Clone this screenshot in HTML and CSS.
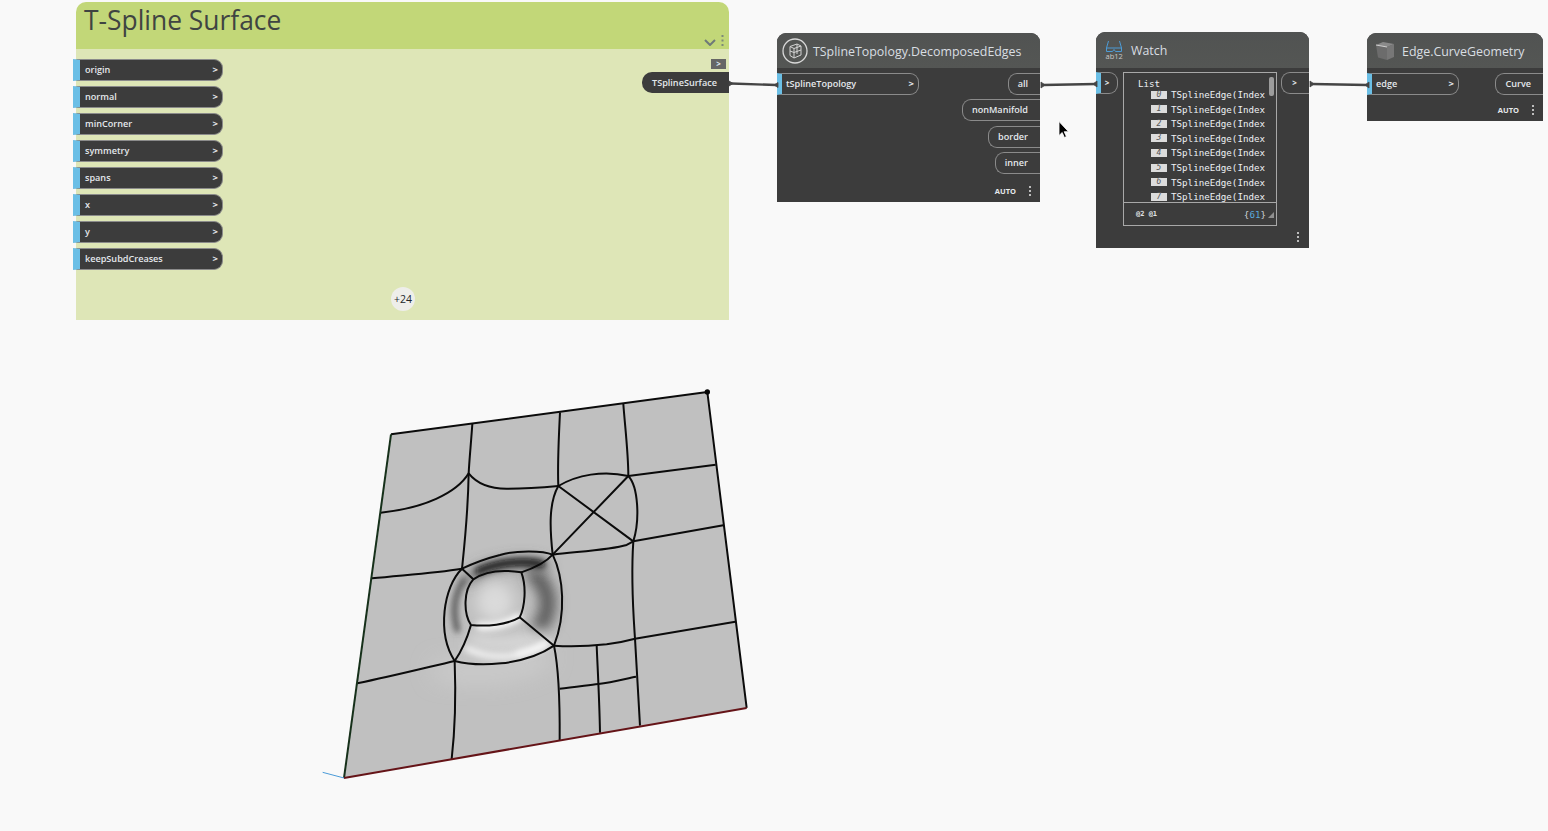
FILE: index.html
```html
<!DOCTYPE html>
<html lang="en">
<head>
<meta charset="utf-8">
<title>T-Spline Surface</title>
<link rel="stylesheet" href="styles.css">
</head>
<body>
<main class="canvas">

  <section class="group">
    <header class="group-head">
      <h1 class="group-title">T-Spline Surface</h1>
      <div class="group-tools">
        <svg class="chevron" width="12" height="7" viewBox="0 0 12 7"><path d="M1 1l5 5 5-5" fill="none" stroke="#6f7a78" stroke-width="2"/></svg>
        <svg class="dots" width="3" height="11" viewBox="0 0 3 11"><path d="M1.5 0v2M1.5 4.500v2M1.500 9v2" stroke="#7d8a78" stroke-width="2"/></svg>
      </div>
    </header>
    <div class="group-body">
      <ul class="port-list">
        <li class="port in wide"><span>origin</span><b>&gt;</b></li>
        <li class="port in wide"><span>normal</span><b>&gt;</b></li>
        <li class="port in wide"><span>minCorner</span><b>&gt;</b></li>
        <li class="port in wide"><span>symmetry</span><b>&gt;</b></li>
        <li class="port in wide"><span>spans</span><b>&gt;</b></li>
        <li class="port in wide"><span>x</span><b>&gt;</b></li>
        <li class="port in wide"><span>y</span><b>&gt;</b></li>
        <li class="port in wide"><span>keepSubdCreases</span><b>&gt;</b></li>
      </ul>
      <div class="group-count">+24</div>
      <div class="mini-tag">&gt;</div>
      <div class="group-out">TSplineSurface</div>
    </div>
  </section>

  <article class="node node-edges">
    <header class="node-head">
      <svg class="icon-round" width="26" height="26" viewBox="0 0 26 26">
        <circle cx="13" cy="13" r="12" fill="none" stroke="#d8d8d8" stroke-width="1.300"/>
        <path d="M8 8.500l7-2.500 4 2v9l-7 3-4-2.500zM12 10.500l7-2.500M12 10.500l-4-2M12 10.500v9.500M8 13l4 1.500 7-2.500M15 6v10" fill="none" stroke="#d4d4d4" stroke-width="1"/>
      </svg>
      <h2 class="node-title">TSplineTopology.DecomposedEdges</h2>
    </header>
    <div class="node-body">
      <div class="port in edge-in"><span>tSplineTopology</span><b>&gt;</b></div>
      <div class="out-list">
        <div class="port out">all</div>
        <div class="port out">nonManifold</div>
        <div class="port out">border</div>
        <div class="port out">inner</div>
      </div>
    </div>
    <footer class="node-foot"><span class="auto">AUTO</span><i class="kebab"></i></footer>
  </article>

  <article class="node node-watch">
    <header class="node-head watch-head">
      <svg class="icon-watch" width="18" height="20" viewBox="0 0 18 20">
        <path d="M3.500 1L1.500 8v3.500h6L9 9.500l1.500 2h6V8l-2-7M1.500 8h15" fill="none" stroke="#4c9bd6" stroke-width="1"/>
        <text x="0.500" y="19" class="abc">ab12</text>
      </svg>
      <h2 class="node-title">Watch</h2>
    </header>
    <div class="watch-body">
      <div class="port in short"><b>&gt;</b></div>
      <div class="watch-panel">
        <div class="watch-list">
          <div class="watch-root">List</div>
          <div class="watch-row"><i>0</i><span>TSplineEdge(Index</span></div>
          <div class="watch-row"><i>1</i><span>TSplineEdge(Index</span></div>
          <div class="watch-row"><i>2</i><span>TSplineEdge(Index</span></div>
          <div class="watch-row"><i>3</i><span>TSplineEdge(Index</span></div>
          <div class="watch-row"><i>4</i><span>TSplineEdge(Index</span></div>
          <div class="watch-row"><i>5</i><span>TSplineEdge(Index</span></div>
          <div class="watch-row"><i>6</i><span>TSplineEdge(Index</span></div>
          <div class="watch-row"><i>7</i><span>TSplineEdge(Index</span></div>
          <div class="watch-thumb"></div>
        </div>
        <div class="watch-foot">
          <span class="levels">@2 @1</span>
          <span class="count">{<em>61</em>}</span>
          <svg class="grip" width="6" height="6" viewBox="0 0 6 6"><path d="M6 0v6H0z" fill="#8f8f8f"/></svg>
        </div>
      </div>
      <div class="port out short-out"><b>&gt;</b></div>
    </div>
    <footer class="node-foot watch-foot-bar"><i class="kebab"></i></footer>
  </article>

  <article class="node node-curve">
    <header class="node-head">
      <svg class="icon-cube" width="20" height="20" viewBox="0 0 20 20">
        <path d="M1 4l11 2v13L3 16.500z" fill="#6c6c6c"/>
        <path d="M12 6l7-3v13l-7 3z" fill="#777"/>
        <path d="M1 4l7-3 11 2-7 3z" fill="#8a8a8a"/>
        <path d="M1 4l11 2" stroke="#cfcfcf" stroke-width="1"/>
      </svg>
      <h2 class="node-title">Edge.CurveGeometry</h2>
    </header>
    <div class="node-body">
      <div class="port in curve-in"><span>edge</span><b>&gt;</b></div>
      <div class="out-list"><div class="port out">Curve</div></div>
    </div>
    <footer class="node-foot curve-foot"><span class="auto">AUTO</span><i class="kebab"></i></footer>
  </article>

  <svg class="overlay" width="1548" height="831" viewBox="0 0 1548 831">
    <g class="wires">
      <path d="M731 83.500L776 85M1043 85L1096 84M1312 84L1367 85"/>
      <path class="cap" d="M729 81l4 2.500-4 2.500zM778 82.500l-4 2.500 4 2.500zM1041 82l4 3-4 3zM1097 81l-4 3 4 3zM1310 81l4 3-4 3zM1369 82l-4 3 4 3z"/>
    </g>
    <path d="M1059 121.500v14l3.200-3 2.200 5 2-.9-2.200-4.900h4.300z" fill="#000" stroke="#fff" stroke-width=".8"/>

    <g transform="translate(310 380) scale(.33333)">
      <defs>
        <clipPath id="sheet"><path d="M243 163L1192 36 1310 984 102 1194z"/></clipPath>
        <filter id="blur-lg" filterUnits="userSpaceOnUse" x="0" y="0" width="1400" height="1300"><feGaussianBlur stdDeviation="36"/></filter>
        <filter id="blur-md" filterUnits="userSpaceOnUse" x="0" y="0" width="1400" height="1300"><feGaussianBlur stdDeviation="20"/></filter>
        <filter id="blur-sm" filterUnits="userSpaceOnUse" x="0" y="0" width="1400" height="1300"><feGaussianBlur stdDeviation="10"/></filter>
      </defs>
      <path d="M243 163L1192 36 1310 984 102 1194z" fill="#c0c0c0"/>
      <g clip-path="url(#sheet)" fill="none" stroke-linecap="round">
        <path d="M390 870C480 880 600 890 700 830" stroke="#d8d8d8" stroke-width="30" filter="url(#blur-lg)"/>
        <path d="M672 585C725 630 725 690 690 740" stroke="#4a4a4a" stroke-width="42" filter="url(#blur-md)"/>
        <path d="M475 600C505 560 640 530 705 560" stroke="#5a5a5a" stroke-width="22" filter="url(#blur-md)"/>
        <path d="M505 574C560 548 640 540 695 552" stroke="#080808" stroke-width="20" filter="url(#blur-sm)"/>
        <path d="M462 600C435 640 425 690 442 750" stroke="#4c4c4c" stroke-width="16" filter="url(#blur-sm)"/>
        <ellipse cx="555" cy="665" rx="55" ry="58" fill="#dadada" filter="url(#blur-md)"/>
        <path d="M490 780C560 800 640 790 700 770" stroke="#e2e2e2" stroke-width="30" filter="url(#blur-md)"/>
        <path d="M470 805C540 842 640 838 712 790" stroke="#f6f6f6" stroke-width="16" filter="url(#blur-sm)"/>
        <path d="M625 820C655 814 680 804 708 790" stroke="#fff" stroke-width="12" filter="url(#blur-sm)"/>
        <path d="M510 738C550 742 590 732 625 712" stroke="#fff" stroke-width="22" filter="url(#blur-sm)"/>
      </g>
      <g class="mesh">
        <path d="M487 132C483 190 478 240 476 280C474 400 465 480 456 566"/>
        <path d="M476 280C440 340 340 385 212 398"/>
        <path d="M476 280C500 310 540 326 590 326C640 326 700 322 745 318"/>
        <path d="M750 97C746 180 742 250 745 318"/>
        <path d="M940 72C945 140 955 220 955 288"/>
        <path d="M745 318C800 285 880 270 955 288"/>
        <path d="M955 288L1217 254"/>
        <path d="M745 318C715 370 720 450 728 524"/>
        <path d="M955 288C985 320 990 420 970 484"/>
        <path d="M745 318L970 484M955 288L728 524"/>
        <path d="M970 484L1240 436"/>
        <path d="M970 484C962 600 970 700 975 776C980 860 985 950 990 1037"/>
        <path d="M728 524C800 515 900 510 950 495L970 484"/>
        <path d="M728 524C700 512 620 510 570 525C530 535 490 550 456 566"/>
        <path d="M186 595C280 585 370 580 456 566"/>
        <path d="M728 524C760 590 770 700 732 797"/>
        <path d="M456 566C400 620 380 760 434 843"/>
        <path d="M434 843C500 860 640 860 732 797"/>
        <path d="M490 598C530 570 590 570 634 577C650 620 645 680 629 712C590 735 530 740 483 735C460 700 460 630 490 598z"/>
        <path d="M456 566L490 598M629 712L732 797"/>
        <path d="M634 577C670 565 705 550 728 524"/>
        <path d="M483 735C470 780 450 820 434 843"/>
        <path d="M142 910C240 890 340 865 434 843"/>
        <path d="M434 843C438 950 435 1050 425 1137"/>
        <path d="M732 797C745 860 750 950 749 1080"/>
        <path d="M732 797C780 800 840 798 890 793C930 788 960 780 975 776L1276 725"/>
        <path d="M860 795C862 850 868 950 870 1058"/>
        <path d="M749 926C790 922 830 916 865 912C910 908 950 895 978 890"/>
        <path d="M243 163L1192 36 1310 984"/>
        <path class="edge-green" d="M243 163L102 1194"/>
        <path class="edge-red" d="M102 1194L1310 984"/>
        <path class="axis" d="M38 1177L102 1194"/>
        <circle class="corner" cx="1192" cy="36" r="8"/>
      </g>
    </g>
  </svg>
</main>
</body>
</html>
```

FILE: styles.css
```css
* { box-sizing: border-box; }
html, body { margin: 0; height: 100%; }
body {
  background: #f9f9f9;
  font-family: "Open Sans", "Liberation Sans", sans-serif;
  overflow: hidden;
}
ul { list-style: none; margin: 0; padding: 0; }
h1, h2 { margin: 0; font-weight: 400; }
.canvas { position: relative; width: 1548px; height: 831px; }
.overlay { position: absolute; left: 0; top: 0; pointer-events: none; }

/* group */
.group { position: absolute; left: 76px; top: 2px; width: 653px; height: 318px; display: flex; flex-direction: column; }
.group-head {
  height: 47px; background: #c2d778; border-radius: 10px 10px 0 0;
  display: flex; justify-content: space-between; padding: 0 5px 0 8px;
}
.group-title { font-size: 26.400px; line-height: 36px; color: #3f4442; }
.group-tools { display: flex; align-items: flex-end; gap: 5px; padding-bottom: 3px; }
.group-body { position: relative; flex: 1; background: #dee6b7; padding-top: 10px; }
.port-list { display: flex; flex-direction: column; gap: 5px; margin-left: -3px; }
.group-count {
  position: absolute; left: 315px; top: 238px; width: 24px; height: 24px; border-radius: 50%;
  background: #eeeeea; color: #23282c; font-size: 10.500px; line-height: 24px; text-align: center;
}
.mini-tag {
  position: absolute; left: 635px; top: 10px; width: 15px; height: 10px; background: #666;
  color: #dfe7f0; font-size: 8px; line-height: 10px; font-weight: 700; text-align: center;
}
.group-out {
  position: absolute; right: 0; top: 23px; width: 87px; height: 21px; background: #3c3c3c;
  border-radius: 10px 0 0 10px; color: #e4e8ec; font-size: 9.100px; font-weight: 600; line-height: 21px; padding-left: 10px;
}

/* ports */
.port {
  height: 22px; color: #e4e8ec; background: #3c3c3c; border: 1px solid #8b8b8b;
  font-size: 9.100px; font-weight: 600; line-height: 20px; white-space: nowrap;
}
.port b { font-weight: 700; font-size: 9.500px; }
.port.in {
  display: flex; justify-content: space-between; align-items: center;
  border-left: 7px solid #6bbfe6; border-radius: 0 9px 9px 0; padding: 0 4px 0 5px;
}
.port.wide { width: 150px; }
.port.out {
  border-right: 0; border-radius: 9px 0 0 9px; padding: 0 12px 0 9px; color: #e4e8ec;
}

/* nodes */
.node { position: absolute; background: #3c3c3c; border-radius: 9px 9px 0 0; display: flex; flex-direction: column; }
.node-edges { left: 777px; top: 33px; width: 263px; height: 169px; }
.node-watch { left: 1096px; top: 32px; width: 213px; height: 216px; }
.node-curve { left: 1367px; top: 33px; width: 176px; height: 88px; }
.node-head {
  height: 35px; background: linear-gradient(#515352, #545654); border-radius: 9px 9px 0 0;
  display: flex; align-items: center; gap: 5px; padding-left: 5px;
}
.watch-head { gap: 8px; padding-left: 9px; height: 36px; }
.node-curve .node-head { gap: 7px; padding-left: 8px; }
.node-title { font-size: 12.400px; line-height: 18px; padding-top: 2px; color: #d9dee2; }
.node-body { display: flex; justify-content: space-between; padding-top: 5px; }
.edge-in { width: 142px; }
.curve-in { width: 92px; }
.port.in.edge-in, .port.in.curve-in { border-left-width: 5px; padding-left: 4px; }
.out-list { display: flex; flex-direction: column; align-items: flex-end; gap: 4.300px; }
.node-foot { margin-top: auto; display: flex; justify-content: flex-end; align-items: center; gap: 13px; height: 22px; padding-right: 9px; }
.curve-foot { height: 23px; }
.auto { font-size: 7.500px; font-weight: 700; color: #e6e9ec; }
.kebab { width: 2px; height: 10px; background: repeating-linear-gradient(#bdbdbd 0 2px, transparent 2px 4px); }
.watch-foot-bar { padding-right: 10px; }

/* watch */
.watch-body { display: flex; align-items: flex-start; gap: 5px; padding-top: 4px; }
.port.short { width: 22px; border-left-width: 5px; justify-content: center; padding: 0 4px 0 0; }
.port.short-out { flex: 1; margin-left: -1px; padding: 0 2px 0 0; display: flex; justify-content: center; }
.port.short b, .port.short-out b { font-size: 8px; }
.watch-panel { width: 154px; height: 154px; border: 1px solid #a8a8a8; display: flex; flex-direction: column; font-family: "DejaVu Sans Mono", "Liberation Mono", monospace; color: #eef1f4; }
.watch-list { position: relative; height: 130px; border-bottom: 1px solid #a8a8a8; padding-top: 5px; overflow: hidden; }
.watch-root { font-size: 9.200px; line-height: 11px; padding-left: 14px; }
.watch-row { display: flex; align-items: center; gap: 4px; height: 14.600px; padding-left: 27px; font-size: 9.200px; white-space: nowrap; }
.watch-root + .watch-row { margin-top: -1.700px; }
.watch-row i { width: 16px; height: 8px; background: #dcdcdc; color: #555; font-size: 8px; line-height: 8px; text-align: center; }
.watch-thumb { position: absolute; left: 145px; top: 4px; width: 5px; height: 19px; border-radius: 2px; background: #9c9c9c; }
.watch-foot { flex: 1; display: flex; align-items: center; padding: 0 2px 0 12px; font-size: 7px; }
.levels { color: #e0e3e6; font-weight: 700; margin-right: auto; }
.count { font-size: 9.200px; color: #cfd3d6; }
.count em { font-style: normal; color: #5aa9dc; }
.grip { margin: 2px 0 0 2px; }

/* svg art */
.abc { font-family: "Open Sans", sans-serif; font-size: 7.500px; fill: #c8c8c8; }
.wires path { fill: none; stroke: #454545; stroke-width: 2.400; }
.wires .cap { fill: #454545; stroke-width: .8; }
.mesh path { fill: none; stroke: #0b0b0b; stroke-width: 6; stroke-linejoin: round; }
.mesh .edge-green { stroke: #16301a; }
.mesh .edge-red { stroke: #651418; }
.mesh .axis { stroke: #4a9bd8; stroke-width: 3; }
.corner { fill: #050505; }
```
